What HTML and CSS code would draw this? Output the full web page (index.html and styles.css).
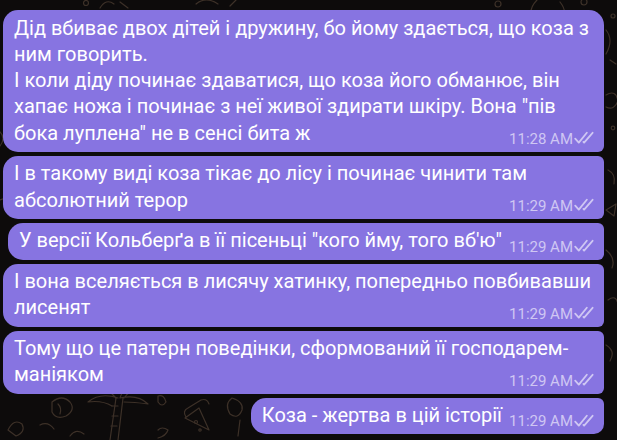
FILE: index.html
```html
<!DOCTYPE html>
<html lang="uk">
<head>
  <meta charset="UTF-8">
  <title>Чат</title>
  <link rel="stylesheet" href="styles.css">
</head>
<body>
  <div class="chat">
    <!-- faint doodle wallpaper -->
    <svg class="wallpaper" width="617" height="440" viewBox="0 0 617 440" fill="none" stroke="#3d3128" stroke-width="1.2" stroke-linecap="round" stroke-linejoin="round">
      <circle cx="86" cy="3" r="2.5"/>
      <path d="M100 8 q6 -10 14 -4 M120 2 l8 6"/>
      <path d="M196 4 q10 -8 22 0 M230 6 l6 -6"/>
      <circle cx="498" cy="4" r="3"/>
      <path d="M537 0 q-10 10 -4 22 M560 2 q8 10 2 18"/>
      <circle cx="584" cy="2" r="3"/>
      <circle cx="613" cy="16" r="2"/>
      <path d="M606 30 q8 10 0 24 M610 60 l6 4 M606 95 q10 -6 12 6 q-4 10 -12 6"/>
      <circle cx="613" cy="128" r="1.8"/>
      <path d="M608 170 q8 4 6 14 M606 210 l10 -6 l-2 12 z"/>
      <path d="M606 250 q10 8 6 18 M608 300 q8 -6 10 4 M606 345 q10 6 4 16"/>
      <path d="M0 132 q6 6 0 14 M0 200 q8 -4 10 6"/>
      <!-- bottom left doodles -->
      <path d="M8 430 q6 -12 14 -6 q4 8 -6 12 z"/>
      <path d="M52 402 q10 -8 18 0 q6 8 -4 14 q-10 4 -14 -4 z M58 404 q4 4 2 10"/>
      <path d="M40 425 q8 -4 14 4"/>
      <path d="M110 440 l6 -42 M118 440 l5 -42"/>
      <path d="M118 398 q-18 -6 -30 4 q14 -2 24 4 M120 398 q4 -14 20 -12 q-10 4 -16 12 M120 398 q18 -4 28 6 q-14 -2 -24 -2 M116 398 q-10 -12 -24 -10"/>
      <path d="M112 406 l6 0 M112 416 l6 0 M111 426 l6 0"/>
      <path d="M158 396 q6 -2 8 6 q-4 6 -8 0 z"/>
      <path d="M185 418 l14 -10 l10 22 z M186 417 q-4 -6 2 -9 l13 -8 q6 -2 8 4"/>
      <circle cx="196" cy="422" r="1.5"/>
      <circle cx="200" cy="430" r="1.2"/>
      <path d="M158 430 q4 -4 10 0 q-2 6 -10 8"/>
      <path d="M232 398 q-8 6 -2 16 q8 6 12 -4 q2 -8 -10 -12 z M240 420 l-2 16"/>
      <path d="M70 436 q6 -8 14 -2"/>
    </svg>

    <div class="messages">
      <div class="bubble first">
        <span class="text">Дід вбиває двох дітей і дружину, бо йому здається, що коза з ним говорить.<br>І коли діду починає здаватися, що коза його обманює, він хапає ножа і починає з неї живої здирати шкіру. Вона "пів бока луплена" не в сенсі бита ж</span><span class="spacer"></span>
        <span class="meta">11:28 AM<svg class="check" width="20" height="14" viewBox="0 0 20 14" fill="none" stroke="currentColor" stroke-width="1.8" stroke-linecap="round" stroke-linejoin="round"><path d="M1.2 7.6 L4.8 11.6 L12.8 1.8"/><path d="M9.4 10.9 L10.1 11.6 L18.6 1.8"/></svg></span>
      </div>
      <div class="bubble">
        <span class="text">І в такому виді коза тікає до лісу і починає чинити там абсолютний терор</span><span class="spacer"></span>
        <span class="meta">11:29 AM<svg class="check" width="20" height="14" viewBox="0 0 20 14" fill="none" stroke="currentColor" stroke-width="1.8" stroke-linecap="round" stroke-linejoin="round"><path d="M1.2 7.6 L4.8 11.6 L12.8 1.8"/><path d="M9.4 10.9 L10.1 11.6 L18.6 1.8"/></svg></span>
      </div>
      <div class="bubble">
        <span class="text">У версії Кольберґа в її пісеньці "кого йму, того вб'ю"</span><span class="spacer"></span>
        <span class="meta">11:29 AM<svg class="check" width="20" height="14" viewBox="0 0 20 14" fill="none" stroke="currentColor" stroke-width="1.8" stroke-linecap="round" stroke-linejoin="round"><path d="M1.2 7.6 L4.8 11.6 L12.8 1.8"/><path d="M9.4 10.9 L10.1 11.6 L18.6 1.8"/></svg></span>
      </div>
      <div class="bubble">
        <span class="text">І вона вселяється в лисячу хатинку, попередньо повбивавши лисенят</span><span class="spacer"></span>
        <span class="meta">11:29 AM<svg class="check" width="20" height="14" viewBox="0 0 20 14" fill="none" stroke="currentColor" stroke-width="1.8" stroke-linecap="round" stroke-linejoin="round"><path d="M1.2 7.6 L4.8 11.6 L12.8 1.8"/><path d="M9.4 10.9 L10.1 11.6 L18.6 1.8"/></svg></span>
      </div>
      <div class="bubble">
        <span class="text">Тому що це патерн поведінки, сформований її господарем-маніяком</span><span class="spacer"></span>
        <span class="meta">11:29 AM<svg class="check" width="20" height="14" viewBox="0 0 20 14" fill="none" stroke="currentColor" stroke-width="1.8" stroke-linecap="round" stroke-linejoin="round"><path d="M1.2 7.6 L4.8 11.6 L12.8 1.8"/><path d="M9.4 10.9 L10.1 11.6 L18.6 1.8"/></svg></span>
      </div>
      <div class="bubble last">
        <span class="text">Коза - жертва в цій історії</span><span class="spacer"></span>
        <span class="meta">11:29 AM<svg class="check" width="20" height="14" viewBox="0 0 20 14" fill="none" stroke="currentColor" stroke-width="1.8" stroke-linecap="round" stroke-linejoin="round"><path d="M1.2 7.6 L4.8 11.6 L12.8 1.8"/><path d="M9.4 10.9 L10.1 11.6 L18.6 1.8"/></svg></span>
      </div>
    </div>
  </div>
</body>
</html>
```

FILE: styles.css
```css
html, body {
  margin: 0;
  height: 100%;
}
body {
  background: #0d0b0b;
  font-family: Roboto, "Noto Sans", sans-serif;
  overflow: hidden;
}
.chat {
  position: relative;
  width: 617px;
  height: 440px;
}
.wallpaper {
  position: absolute;
  left: 0;
  top: 0;
}
.messages {
  position: relative;
  display: flex;
  flex-direction: column;
  align-items: flex-end;
  gap: 4px;
  padding: 10px 13px 0 3px;
}
.bubble {
  position: relative;
  max-width: 580px;
  padding: 4.5px 10px 6px 11px;
  background: #8774e1;
  color: #fff;
  font-size: 20px;
  line-height: 26.25px;
  border-radius: 15px 6px 6px 15px;
}
.bubble.first {
  border-top-right-radius: 15px;
}
.bubble.last {
  border-bottom-right-radius: 10px;
}
.spacer {
  display: inline-block;
  width: 92px;
  height: 1px;
}
.meta {
  position: absolute;
  right: 10px;
  bottom: 3px;
  display: flex;
  align-items: center;
  font-size: 15px;
  line-height: 20px;
  color: #cfc7f3;
}
.check {
  margin-left: 1px;
  margin-top: -1px;
}
```
